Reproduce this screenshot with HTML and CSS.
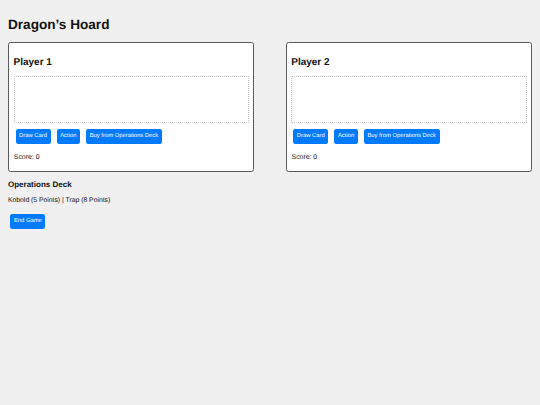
FILE: index.html
```html
<!DOCTYPE html>
<html lang="en">
<head>
<meta charset="utf-8">
<title>Dragon’s Hoard</title>
<link rel="stylesheet" href="styles.css">
</head>
<body>
<h1 class="title">Dragon’s Hoard</h1>
<div class="players">
  <section class="player">
    <h2 class="player-name">Player 1</h2>
    <div class="hand"></div>
    <div class="actions">
      <button class="btn">Draw Card</button>
      <button class="btn">Action</button>
      <button class="btn">Buy from Operations Deck</button>
    </div>
    <p class="score">Score: 0</p>
  </section>
  <section class="player">
    <h2 class="player-name">Player 2</h2>
    <div class="hand"></div>
    <div class="actions">
      <button class="btn">Draw Card</button>
      <button class="btn">Action</button>
      <button class="btn">Buy from Operations Deck</button>
    </div>
    <p class="score">Score: 0</p>
  </section>
</div>
<h3 class="deck-title">Operations Deck</h3>
<p class="deck-list">Kobold (5 Points) | Trap (8 Points)</p>
<div class="end-row">
  <button class="btn end">End Game</button>
</div>
</body>
</html>
```

FILE: styles.css
```css
html, body {
  margin: 0;
  padding: 0;
}
body {
  background: #f0f0f0;
  font-family: "Liberation Sans", Arial, sans-serif;
  color: #111;
  padding: 0 8px;
  text-rendering: geometricPrecision;
}
.title {
  font-size: 13.6px;
  line-height: 16.1px;
  font-weight: bold;
  margin: 0 0 9.8px;
  padding-top: 16.6px;
}
.players {
  display: flex;
  justify-content: space-between;
  align-items: flex-start;
}
.player {
  width: 47%;
  box-sizing: border-box;
  background: #fff;
  border: 1px solid #5a5a5a;
  border-radius: 2.5px;
  padding: 4.5px;
}
.player-name {
  font-size: 10px;
  line-height: 12.1px;
  font-weight: bold;
  margin: 8.6px 0 7.6px;
}
.hand {
  height: 45px;
  border: 1px dotted #c4c4c4;
}
.actions {
  display: flex;
  gap: 6px;
  margin: 6px 0 0 2px;
}
.btn {
  font-family: "Liberation Sans", Arial, sans-serif;
  font-size: 5.85px;
  line-height: 7px;
  color: #fff;
  background: #007bff;
  border: none;
  border-radius: 2.25px;
  padding: 4px 3.6px;
  height: 15px;
  cursor: pointer;
  text-rendering: geometricPrecision;
}
.score {
  font-size: 6.9px;
  line-height: 8.3px;
  margin: 9.4px 0 4.6px;
  padding-left: 0.3px;
}
.deck-title {
  font-size: 8px;
  line-height: 9.7px;
  font-weight: bold;
  margin: 7.8px 0 7.4px;
}
.deck-list {
  font-size: 6.8px;
  line-height: 8.3px;
  margin: 0;
}
.end-row {
  display: flex;
  margin-top: 9px;
  padding-left: 2.3px;
}
.btn.end {
  height: 14.5px;
}
```
